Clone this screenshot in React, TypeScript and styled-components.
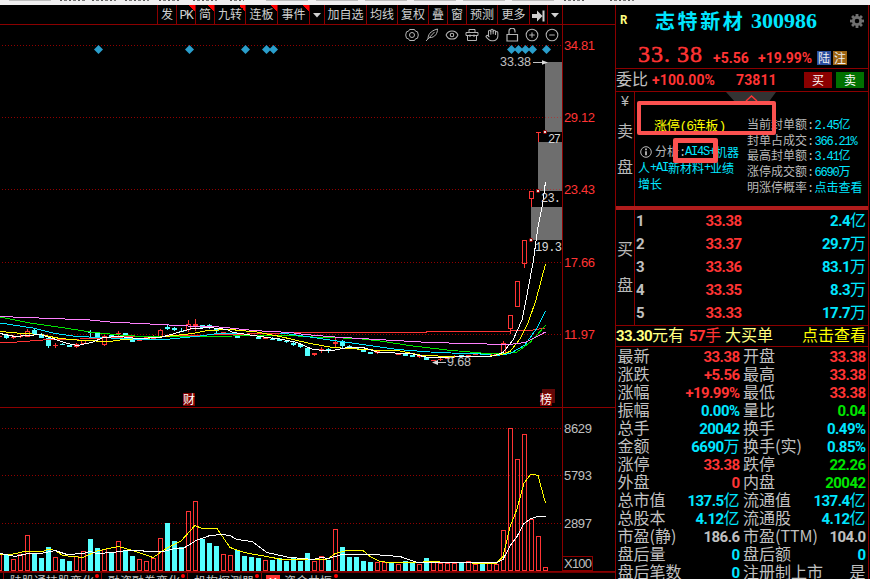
import React from "react";
import styled, { createGlobalStyle, css } from "styled-components";
import { Eye, Hand, CirclePlus, CircleMinus } from "lucide-react";

const RED = "#ff3434";
const CYAN = "#00e6ff";
const BAR_CYAN = "#54ffff";
const GREEN = "#00e600";
const GREY = "#c0c0c0";
const LINE = "#8b0000";
const PALE = "#ffff80";
const YELLOW = "#ffff00";
const CJK = `"Noto Sans CJK SC", sans-serif`;

const Global = createGlobalStyle`
  * { box-sizing: border-box; }
  html, body { margin: 0; background: #000; overflow: hidden; }
  body { font-family: "Liberation Sans", ${CJK}; color: ${GREY}; }
`;

/* ---------- frame ---------- */
const Screen = styled.div`
  width: 870px;
  height: 579px;
  display: flex;
  flex-direction: column;
  background: #000;
  overflow: hidden;
`;
const TopStrip = styled.div`
  flex: 0 0 5px;
  display: flex;
  background: #f0eff0;
`;
const Fragment = styled.i<{ $w: number; $ml: number; $text?: boolean }>`
  flex: none;
  width: ${(p) => p.$w}px;
  margin-left: ${(p) => p.$ml}px;
  height: 1px;
  background: ${(p) =>
    p.$text
      ? "repeating-linear-gradient(90deg,#555 0 2px,transparent 2px 4px,#777 4px 7px,transparent 7px 9px)"
      : "#bdbdbd"};
`;
const Body = styled.div`
  flex: 1;
  display: flex;
  min-height: 0;
`;
const Left = styled.div`
  width: 615px;
  display: flex;
  flex-direction: column;
`;

/* ---------- toolbar ---------- */
const Toolbar = styled.div`
  display: flex;
  flex: 0 0 20px;
  border-bottom: 1px solid ${LINE};
  padding-left: 157px;
`;
const Tool = styled.div<{ $w: number; $hot?: boolean; $last?: boolean }>`
  width: ${(p) => p.$w}px;
  height: 19px;
  border-left: 1px solid ${LINE};
  ${(p) => p.$last && css`border-right: 1px solid ${LINE};`}
  display: flex;
  align-items: center;
  justify-content: center;
  padding-top: 2px;
  font: 12px/17px "Liberation Sans", ${CJK};
  color: #d0d0d0;
  white-space: nowrap;
  ${(p) =>
    p.$hot &&
    css`background: linear-gradient(45deg, transparent 50%, #ff0000 50%) top right / 6px 6px no-repeat;`}
`;
const Latin = styled.span`
  font: 13px/17px "Liberation Mono", monospace;
  letter-spacing: -1.4px;
`;
const tools: [React.ReactNode, number, boolean][] = [
  ["发", 19, false],
  [<Latin key="pk">PK</Latin>, 19, true],
  ["简", 19, true],
  ["九转", 31, true],
  ["连板", 32, true],
  ["事件", 32, true],
  [<Caret key="a" />, 15, false],
  ["加自选", 42, false],
  ["均线", 31, false],
  ["复权", 31, false],
  ["叠", 19, false],
  ["窗", 19, false],
  ["预测", 31, false],
  ["更多", 32, false],
  [<Skip key="b" />, 18, false],
  [<Caret key="c" />, 16, false],
];
function Caret() {
  return (
    <svg width="8" height="5" viewBox="0 0 8 5">
      <path d="M0 0h8L4 4.6z" fill="#d0d0d0" />
    </svg>
  );
}
function Skip() {
  return (
    <svg width="13" height="12" viewBox="0 0 13 12">
      <path d="M0 4h5V0.500l5.500 5.500-5.500 5.500V8H0zM10.500 0.500h2v11h-2z" fill="#d0d0d0" />
    </svg>
  );
}

/* ---------- chart ---------- */
const ChartSvg = styled.svg`
  display: block;
  flex: 0 0 547px;
  font-family: "Liberation Sans", ${CJK};
`;
const ChartArea = styled.div`
  position: relative;
  height: 547px;
`;
const ChartIcons = styled.div`
  position: absolute;
  top: 3px;
  right: 56px;
  display: flex;
  gap: 6px;
  color: #b4b4b4;
`;
const Outline = styled.svg.attrs({ width: 14, height: 14, viewBox: "0 0 14 14" })`
  fill: none;
  stroke: currentColor;
  stroke-width: 1;
`;

// [body top, body bottom, wick top, wick bottom, colour: r = rising, c = falling]
type Candle = [number, number, number, number, "r" | "c"];
const candles: Candle[] = [
  [335, 338, 335, 339, "c"], [337, 338, 335, 339, "r"], [336, 337, 333, 338, "r"], [331, 337, 329, 337, "r"],
  [330, 334, 328, 334, "c"], [334, 338, 333, 338, "c"], [338, 346, 338, 348, "c"], [345, 346, 343, 348, "r"],
  [344, 345, 343, 345, "c"], [345, 347, 345, 347, "c"], [344, 347, 343, 348, "r"], [340, 344, 340, 344, "r"],
  [332, 333, 330, 337, "c"], [333, 338, 333, 338, "c"], [336, 345, 335, 346, "r"], [335, 338, 334, 338, "c"],
  [333, 334, 331, 337, "r"], [333, 337, 333, 337, "c"], [339, 342, 339, 342, "c"], [339, 341, 339, 341, "r"],
  [337, 338, 337, 338, "r"], [337, 339, 335, 339, "r"], [330, 337, 329, 337, "r"], [327, 329, 325, 330, "c"],
  [328, 330, 327, 331, "c"], [331, 332, 328, 332, "c"], [324, 330, 320, 332, "r"], [324, 326, 319, 331, "r"],
  [325, 328, 325, 328, "c"], [325, 327, 324, 329, "c"], [329, 331, 329, 333, "c"], [332, 334, 332, 334, "r"],
  [334, 335, 334, 335, "r"], [335, 338, 335, 338, "c"], [334, 336, 334, 336, "c"], [335, 336, 335, 336, "c"],
  [337, 339, 336, 339, "c"], [337, 339, 337, 339, "r"], [339, 340, 337, 340, "c"], [339, 341, 339, 341, "c"],
  [341, 342, 341, 343, "c"], [343, 345, 341, 346, "c"], [344, 347, 343, 348, "c"], [348, 356, 348, 356, "c"],
  [353, 355, 353, 356, "r"], [349, 351, 347, 353, "r"], [349, 351, 348, 353, "c"], [342, 344, 337, 348, "r"],
  [341, 346, 340, 348, "c"], [346, 347, 345, 347, "c"], [348, 349, 348, 349, "c"], [350, 352, 350, 352, "c"],
  [352, 354, 352, 354, "c"], [351, 353, 351, 354, "r"], [352, 353, 352, 353, "r"], [352, 353, 352, 353, "c"],
  [354, 355, 354, 355, "r"], [354, 356, 354, 356, "c"], [355, 357, 355, 357, "c"], [356, 357, 355, 358, "r"],
  [357, 360, 357, 360, "c"], [360, 361, 360, 361, "r"], [359, 360, 358, 361, "r"], [357, 359, 357, 359, "r"],
  [356, 357, 355, 358, "r"], [355, 357, 355, 357, "c"], [355, 356, 355, 356, "r"], [354, 355, 354, 355, "r"],
  [353, 355, 353, 355, "c"], [354, 355, 354, 355, "r"], [354, 355, 354, 355, "r"], [343, 354, 341, 354, "r"],
  [315, 329, 315, 334, "r"], [281, 307, 281, 307, "r"], [240, 264, 240, 268, "r"], [191, 199, 191, 207, "r"],
];
// [bar top, colour]
const volumes: [number, "r" | "c"][] = [
  [554, "c"], [559, "r"], [554, "r"], [535, "r"], [553, "c"], [558, "c"], [547, "c"], [557, "r"], [559, "c"], [561, "c"],
  [556, "r"], [551, "r"], [539, "c"], [548, "c"], [549, "r"], [552, "c"], [541, "r"], [551, "c"], [556, "c"], [559, "r"],
  [561, "r"], [558, "r"], [538, "r"], [523, "c"], [541, "c"], [547, "c"], [511, "r"], [501, "r"], [539, "c"], [543, "c"],
  [546, "c"], [554, "r"], [555, "r"], [550, "c"], [556, "c"], [557, "c"], [558, "c"], [560, "r"], [560, "c"], [558, "c"],
  [561, "c"], [558, "c"], [561, "c"], [553, "c"], [561, "r"], [556, "r"], [560, "c"], [529, "r"], [547, "c"], [557, "c"],
  [557, "c"], [561, "c"], [562, "c"], [562, "r"], [562, "r"], [563, "c"], [564, "r"], [561, "c"], [563, "c"], [564, "r"],
  [558, "c"], [562, "r"], [563, "r"], [563, "r"], [563, "r"], [563, "c"], [561, "r"], [564, "r"], [563, "c"], [563, "r"],
  [564, "r"], [530, "r"], [428, "r"], [459, "r"], [434, "r"], [519, "r"], [536, "r"], [567, "r"],
];
const averages: [string, string][] = [
  ["#ff3434", "0,343 17,342 43,340 80,339 123,337 167,336 207,335 267,333.500 290,333 360,332.500 493,331.500 530,330.500 545,328"],
  ["#00e600", "0,317 15,320 30,323 65,328 90,332 120,335 143,336.500 200,336.500 233,336 290,335.500 313,337 358,338.500 380,341 413,346 447,350 487,353.500 503,354 517,352 530,342.500 545.500,325.500"],
  ["#00e6ff", "0,323 33,328 55,333.500 77,336.500 100,337.500 133,339 170,339 185,337.500 200,336 217,333.500 243,333 280,333 293,334.500 330,340 373,346 397,349.500 437,352.500 480,354 497,355.500 510,353.500 525,345 537,328 545.500,311"],
  ["#ffff00", "0,331.500 17,333 40,334.500 60,338.500 82,340.500 110,341.500 123,339.500 150,338 170,336 193,333.500 207,330.500 230,329.500 257,332 280,336.500 310,343.500 333,347.500 373,350 397,350.500 420,355 447,356.500 487,356.500 503,354 510,351.500 520,339 528,323 536,300 545.500,264"],
  ["#ff80ff", "0,316.500 52,318.500 90,320 110,322 150,324 197,326.500 213,326.500 230,328 243,329.500 262,331 290,332.500 305,334.500 335,337 377,339.500 430,342.500 487,344 513,344 525,342.500 535,337.500 545.500,332"],
  ["#ffffff", "0,333.500 15,336.500 40,334.500 53,338.500 67,343.500 78,345.500 93,342 103,337.500 120,336.500 137,338.500 160,337.500 173,334 190,329 210,327.500 227,329.500 233,332.500 247,334.500 267,337.500 280,339 297,342.500 313,349.500 330,351 347,347.500 363,347.500 377,352 413,354 430,358 467,356.500 493,356 503,352.500 513,340 522,320 526,300 533,263 538,227 542,207 545.500,182"],
];
const volumeAverages: [string, string][] = [
  ["#ffff00", "0,554 13,554 27,551 41,552 49,549 55,550.500 63,555.500 83,557.500 97,551 118,546.500 133,550.500 153,557.500 167,548 181,541 195,525.500 202,528.500 217,528.500 230,547.500 244,552.500 272,557.500 282,559.500 303,559.500 328,559 335,553.500 347,550.500 363,550.500 370,556.500 380,561.500 390,562.500 413,562.500 433,561.500 447,562.500 496,563.500 503,556.500 510,527 517,509 524,483 531,474 538,475.500 545.500,503"],
  ["#ffffff", "0,553.500 15,556.500 28,553.500 41,553.500 55,550.500 67,554.500 83,553.500 90,551.500 97,553.500 113,552.500 123,551 140,550.500 147,551.500 163,551.500 175,548.500 183,548.500 197,540 210,535.500 222,534.500 230,535.500 237,539.500 252,541.500 267,552.500 287,557 313,559.500 321,557.500 328,558.500 342,554.500 373,554.500 400,556.500 417,562.500 496,563 503,559.500 510,546 517,536.500 524,523.500 531,518.500 538,516.500 545.500,516.500"],
];
const priceTicks: [number, string][] = [[45, "34.81"], [117, "29.12"], [189, "23.43"], [262, "17.66"], [334, "11.97"]];
const volTicks: [number, string][] = [[428, "8629"], [475, "5793"], [523, "2897"]];
const diamonds = [98, 189, 245, 266, 273, 511, 518, 525, 532, 546];
// [left, top, bottom, label, label x, label width]
const gaps: [number, number, number, string, number, number][] = [
  [545, 62, 132, "27", 548, 13],
  [538, 142, 191, "23.", 541, 20],
  [531, 207, 240, "19.3", 535, 27],
];

function Chart() {
  return (
    <ChartSvg width="615" height="547" viewBox="0 25 615 547" shapeRendering="crispEdges">
      {[...priceTicks, ...volTicks].map(([y]) => (
        <line key={y} x1="2" x2="562" y1={y + 0.5} y2={y + 0.5} stroke="#900000" strokeDasharray="1 2" />
      ))}
      {gaps.map(([x, y1, y2]) => (
        <rect key={x} x={x} y={y1} width={562 - x} height={y2 - y1} fill="#6e6e6e" />
      ))}
      <path d="M538 189.500h24M545 117.500h17" stroke="#a04040" strokeDasharray="1 2" />
      {candles.map(([t, b, wt, wb, c], i) => {
        const x = 6 + i * 7;
        const h = b - t;
        const color = c === "r" ? RED : BAR_CYAN;
        return (
          <g key={i}>
            <path d={`M${x + 0.5} ${wt}V${t}M${x + 0.5} ${b}V${wb}`} stroke={color} />
            {c === "r" && h > 3 ? (
              <rect x={x - 1.5} y={t + 0.5} width="4" height={h - 1} fill="none" stroke={color} />
            ) : (
              <rect x={x - 2} y={t} width="5" height={h} fill={color} />
            )}
          </g>
        );
      })}
      <path d="M536 132.500h5M538.500 132v10" stroke={RED} fill="none" />
      <path d="M0 336.500h2" stroke={RED} />
      {averages.map(([c, p]) => (
        <polyline key={c} points={p} fill="none" stroke={c} />
      ))}
      {volumes.map(([t, c], i) => {
        const x = 4 + i * 7;
        return c === "r" ? (
          <rect key={i} x={x + 0.5} y={t + 0.5} width="4" height={570 - t} fill="none" stroke={RED} />
        ) : (
          <rect key={i} x={x} y={t} width="5" height={571 - t} fill={BAR_CYAN} />
        );
      })}
      <path d="M0 554.500h1.500v16H0" stroke={RED} fill="none" />
      {volumeAverages.map(([c, p]) => (
        <polyline key={c} points={p} fill="none" stroke={c} />
      ))}
      <path d="M0 407.500H615M562.500 25V571M0 571.500H615" stroke={LINE} />
      <rect x="562.500" y="556.500" width="30" height="14" fill="none" stroke={LINE} />
      <g shapeRendering="geometricPrecision">
        {diamonds.map((x) => (
          <path key={x} d={`M${x + 0.5} 45l4.500 4.500l-4.500 4.500l-4.500 -4.500z`} fill="#2a9ecb" />
        ))}
        {gaps.map(([x, , y2]) => (
          <circle key={x} cx={x} cy={y2} r="1.700" fill="#ddd" stroke="#900" />
        ))}
        <path d="M533 62.500h12" stroke="#c0c0c0" />
        <path d="M548 62.500l-6 -2.200v4.400z" fill="#ddd" />
        <path d="M437 362.500h9" stroke="#c0c0c0" />
        <path d="M432 362.500l6 -2.500v5z" fill="#ddd" />
      </g>
      <g fontSize="13" fill={GREY}>
        <text x="500" y="66" textLength="31" fontSize="12.500">33.38</text>
        <text x="447" y="366" textLength="24" fontSize="12.500">9.68</text>
        {volTicks.map(([y, s]) => (
          <text key={s} x="564" y={y + 5} textLength="28">{s}</text>
        ))}
        <text x="564" y="568" textLength="28">X100</text>
      </g>
      <g fontSize="13" fill={RED}>
        {priceTicks.map(([y, s]) => (
          <text key={s} x="564" y={y + 5} textLength="31">{s}</text>
        ))}
      </g>
      <g fontSize="12" fill="#d8d8d8" fontFamily='"Liberation Mono", monospace'>
        {gaps.map(([x, , y2, s, tx, w]) => (
          <text key={x} x={tx} y={y2 + 11} textLength={w}>{s}</text>
        ))}
      </g>
      <rect x="183" y="393" width="12" height="13" fill="#800000" />
      <rect x="542" y="389" width="13" height="14" fill="#600808" />
      <rect x="540" y="393" width="12" height="13" fill="#800000" />
      <g fontSize="12" fill="#fff">
        <text x="183" y="404">财</text>
        <text x="540" y="404">榜</text>
      </g>
    </ChartSvg>
  );
}

/* ---------- bottom tabs ---------- */
const Tabs = styled.div`
  flex: 0 0 7px;
  height: 7px;
  display: flex;
  padding-left: 3px;
  border-top: 1px solid #700000;
  overflow: hidden;
`;
const Tab = styled.div<{ $w: number }>`
  flex: none;
  position: relative;
  width: ${(p) => p.$w}px;
  height: 20px;
  padding-left: 6px;
  border-left: 1px solid ${LINE};
  font: 12px/16px ${CJK};
  color: ${GREY};
  display: flex;
  gap: 4px;
  white-space: nowrap;
  &::after {
    content: "";
    position: absolute;
    right: 2px;
    top: 1px;
    width: 4px;
    height: 4px;
    border-radius: 50%;
    background: #ff0000;
  }
`;
const Flag = styled.b`
  width: 14px;
  height: 14px;
  margin: 2px 0 0 -2px;
  background: ${RED};
  color: #fff;
  font: bold 11px/14px "Liberation Sans", sans-serif;
  text-align: center;
`;

/* ---------- quote panel ---------- */
const Panel = styled.div`
  width: 254px;
  height: 574px;
  border-left: 1px solid ${LINE};
  border-right: 1px solid ${LINE};
  display: flex;
  flex-direction: column;
  overflow: hidden;
`;
const TitleRow = styled.div`
  flex: 0 0 31px;
  display: flex;
  align-items: center;
  white-space: nowrap;
`;
const Mark = styled.span`
  width: 39px;
  padding-left: 4px;
  font: bold 12px/12px "Liberation Mono", monospace;
  color: ${PALE};
`;
const Name = styled.span`
  width: 96px;
  font: bold 20px/26px ${CJK};
  letter-spacing: 2.600px;
  color: ${CYAN};
`;
const Code = styled.span`
  width: 99px;
  font: bold 22px/28px "Liberation Serif", serif;
  color: ${CYAN};
`;
const PriceRow = styled.div`
  flex: 0 0 33px;
  display: flex;
  align-items: flex-end;
  padding: 0 0 3px 22px;
  border-bottom: 1px solid ${LINE};
  color: ${RED};
  white-space: nowrap;
`;
const BigPrice = styled.span`
  width: 75px;
  font: 24px/21px "Liberation Serif", serif;
  letter-spacing: 1px;
  -webkit-text-stroke: 0.5px ${RED};
  i { display: inline-block; width: 13px; font-style: normal; letter-spacing: 0; }
`;
const num = css`
  font-family: Roboto, sans-serif;
  font-weight: bold;
`;
const Change = styled.span<{ $w: number }>`
  ${num}
  width: ${(p) => p.$w}px;
  font-size: 14px;
  line-height: 13px;
`;
const Tag = styled.span<{ $bg: string }>`
  width: 14px;
  height: 14px;
  margin: 0 2px 0 0;
  background: ${(p) => p.$bg};
  color: #eee;
  font: 12px/13px ${CJK};
  text-align: center;
`;
const RatioRow = styled.div`
  flex: 0 0 23px;
  display: flex;
  align-items: center;
  border-bottom: 1px solid ${LINE};
  white-space: nowrap;
`;
const Ratio = styled.span<{ $w: number }>`
  ${num}
  width: ${(p) => p.$w}px;
  padding-left: 4px;
  font-size: 14px;
  line-height: 20px;
  letter-spacing: 0.1px;
  color: ${RED};
`;
const Trade = styled.span<{ $bg: string }>`
  width: 28px;
  height: 16px;
  margin-right: 4px;
  background: ${(p) => p.$bg};
  color: #fff;
  font: 12px/15px ${CJK};
  text-align: center;
`;
const Side = styled.div<{ $top: number }>`
  flex: 0 0 19px;
  border-right: 1px solid ${LINE};
  display: flex;
  flex-direction: column;
  align-items: center;
  padding-top: ${(p) => p.$top}px;
  gap: 20px;
  font: 16px/16px ${CJK};
  color: #b8b8b8;
`;
const Yen = styled.span`
  height: 9px;
  font: 14px/19px "Liberation Mono", monospace;
`;
const SellBlock = styled.div`
  flex: 0 0 114px;
  display: flex;
`;
const SellBody = styled.div`
  position: relative;
  flex: 1;
  display: flex;
`;
const Divider = styled.div`
  flex: 0 0 4px;
  background: #b01c1c;
`;
const Pull = styled.svg`
  position: absolute;
  left: 91px;
  top: 0;
`;
const Frame = styled.div<{ $x: number; $y: number; $w: number; $h: number; $b: number }>`
  position: absolute;
  left: ${(p) => p.$x}px;
  top: ${(p) => p.$y}px;
  width: ${(p) => p.$w}px;
  height: ${(p) => p.$h}px;
  border: ${(p) => p.$b}px solid #fb5150;
  border-radius: 2px;
`;
const Limit = styled.div`
  width: 112px;
  padding: 23px 0 0 3px;
`;
const LimitTitle = styled.div`
  height: 20px;
  padding-left: 16px;
  font: 13px/20px ${CJK};
  letter-spacing: -0.2px;
  color: ${YELLOW};
  white-space: nowrap;
`;
const Analysis = styled.div`
  margin-top: 9px;
  font: 12px/16px ${CJK};
  color: ${CYAN};
  white-space: nowrap;
  div { display: flex; align-items: center; height: 16px; }
  em { font-style: normal; color: #b8b8b8; }
  svg { margin: 0 3px 0 2px; color: #b8b8b8; }
`;
const Mono = styled.span`
  font-family: "Liberation Mono", monospace;
  letter-spacing: -1.200px;
`;
const Facts = styled.div`
  padding-top: 24px;
`;
const Fact = styled.div`
  display: flex;
  height: 15.700px;
  font: 12px/15.700px ${CJK};
  color: #b8b8b8;
  white-space: nowrap;
  > span:first-child { width: 67.500px; }
  > span:last-child { color: ${CYAN}; }
`;
const BuyBlock = styled.div`
  flex: 0 0 116px;
  display: flex;
  border-bottom: 1px solid ${LINE};
`;
const Levels = styled.div`
  flex: 1;
  padding: 0 2px 0 1px;
`;
const Level = styled.div`
  display: grid;
  grid-template-columns: 22px 83.500px 1fr;
  align-items: center;
  height: 22.800px;
`;
const Run = styled.span<{ $c?: string; $end?: boolean }>`
  display: flex;
  align-items: center;
  justify-content: ${(p) => (p.$end ? "flex-end" : "flex-start")};
  color: ${(p) => p.$c || "inherit"};
`;
const Alert = styled.div`
  flex: 0 0 21px;
  display: flex;
  align-items: center;
  padding: 0 2px 0 0;
  border-bottom: 1px solid ${LINE};
  white-space: nowrap;
`;
const Piece = styled(Run)<{ $w?: number }>`
  ${(p) => (p.$w ? `width: ${p.$w}px;` : "margin-left: auto;")}
`;
const Digits = styled.b`
  ${num}
  font-size: 15px;
  line-height: 18px;
  letter-spacing: -0.560px;
`;
const Han = styled.span`
  display: block;
  height: 18px;
  font: 16px/14px ${CJK};
`;
const Stats = styled.div`
  padding: 1px 2px 0 1.500px;
`;
const StatRow = styled.div`
  display: grid;
  grid-template-columns: 122px 122.500px;
  column-gap: 3.500px;
  height: 18px;
`;
const Stat = styled.div`
  display: flex;
  justify-content: space-between;
  white-space: nowrap;
`;

function Mixed({ text }: { text: string }) {
  const runs = text.match(/[\u4e00-\u9fff]+|[^\u4e00-\u9fff]+/g) || [];
  return (
    <>
      {runs.map((r, i) => (/[\u4e00-\u9fff]/.test(r) ? <Han key={i}>{r}</Han> : <Digits key={i}>{r}</Digits>))}
    </>
  );
}
function Small({ text }: { text: string }) {
  const runs = text.match(/[\u4e00-\u9fff]+|[^\u4e00-\u9fff]+/g) || [];
  return (
    <>{runs.map((r, i) => (/[\u4e00-\u9fff]/.test(r) ? r : <Mono key={i}>{r}</Mono>))}</>
  );
}

const facts = [
  ["当前封单额:", "2.45亿"],
  ["封单占成交:", "366.21%"],
  ["最高封单额:", "3.41亿"],
  ["涨停成交额:", "6690万"],
  ["明涨停概率:", "点击查看"],
];
const levels = [
  ["33.38", "2.4亿"],
  ["33.37", "29.7万"],
  ["33.36", "83.1万"],
  ["33.35", "8.3万"],
  ["33.33", "17.7万"],
];
const stats: [string, string, string, string, string, string][] = [
  ["最新", "33.38", RED, "开盘", "33.38", RED],
  ["涨跌", "+5.56", RED, "最高", "33.38", RED],
  ["涨幅", "+19.99%", RED, "最低", "33.38", RED],
  ["振幅", "0.00%", CYAN, "量比", "0.04", GREEN],
  ["总手", "20042", CYAN, "换手", "0.49%", CYAN],
  ["金额", "6690万", CYAN, "换手(实)", "0.85%", CYAN],
  ["涨停", "33.38", RED, "跌停", "22.26", GREEN],
  ["外盘", "0", RED, "内盘", "20042", GREEN],
  ["总市值", "137.5亿", CYAN, "流通值", "137.4亿", CYAN],
  ["总股本", "4.12亿", CYAN, "流通股", "4.12亿", CYAN],
  ["市盈(静)", "186.6", GREY, "市盈(TTM)", "104.0", GREY],
  ["盘后量", "0", CYAN, "盘后额", "0", CYAN],
  ["盘后笔数", "0", CYAN, "注册制上市", "是", GREY],
];

function Nut() {
  return (
    <Outline>
      <path d="M4.500 1.500h5l1 1.700 2 .6.800 3.200-.8 3.200-2 .6-1 1.700h-5l-1-1.700-2-.6L.7 7l.8-3.200 2-.6z" />
      <circle cx="7" cy="7" r="2.500" />
    </Outline>
  );
}
function Quill() {
  return (
    <Outline>
      <path d="M1 13L9.500 4M3 11c0-4 2-8 9.500-10 0 4-2 8.500-8 8.700" />
    </Outline>
  );
}
function Toolbox() {
  return (
    <Outline>
      <path d="M4 4V1.500h6V4M1 4.500h12v3H1zM2.500 7.500v5h9v-5M5 6.500v2.500M9 6.500v2.500" />
    </Outline>
  );
}
function Unlocked() {
  return (
    <Outline>
      <path d="M2 6.500h10.500v6.500H2zM4 6.500v-3a3 3 0 0 1 6-.5v1.500" strokeWidth="1.200" />
    </Outline>
  );
}

function Gear() {
  const teeth = Array.from({ length: 8 }, (_, i) => i * 45);
  return (
    <svg width="14" height="14" viewBox="-7 -7 14 14">
      {teeth.map((a) => (
        <rect key={a} x="-1.400" y="-7" width="2.800" height="4" fill="#707070" transform={`rotate(${a})`} />
      ))}
      <circle r="3.700" fill="none" stroke="#707070" strokeWidth="2.800" />
    </svg>
  );
}

export default function App() {
  return (
    <Screen>
      <Global />
      <TopStrip>
        <Fragment $w={42} $ml={9} />
        <Fragment $w={25} $ml={9} $text />
        <Fragment $w={24} $ml={7} $text />
        <Fragment $w={24} $ml={9} $text />
        <Fragment $w={22} $ml={10} $text />
        <Fragment $w={24} $ml={12} $text />
        <Fragment $w={14} $ml={13} $text />
        <Fragment $w={42} $ml={22} />
        <Fragment $w={42} $ml={8} />
        <Fragment $w={42} $ml={7} />
        <Fragment $w={42} $ml={7} />
        <Fragment $w={42} $ml={7} />
        <Fragment $w={42} $ml={7} />
        <Fragment $w={22} $ml={10} $text />
        <Fragment $w={24} $ml={24} $text />
      </TopStrip>
      <Body>
        <Left>
          <Toolbar>
            {tools.map(([t, w, hot], i) => (
              <Tool key={i} $w={w} $hot={hot} $last={i === tools.length - 1}>{t}</Tool>
            ))}
          </Toolbar>
          <ChartArea>
            <Chart />
            <ChartIcons>
              <Nut />
              <Quill />
              <Eye size={14} strokeWidth={1.8} />
              <Toolbox />
              <Hand size={14} strokeWidth={1.8} />
              <Unlocked />
              <CirclePlus size={14} strokeWidth={1.8} />
              <CircleMinus size={14} strokeWidth={1.8} />
            </ChartIcons>
          </ChartArea>
          <Tabs>
            <Tab $w={98}>陆股通持股变化</Tab>
            <Tab $w={86}>融资融券变化</Tab>
            <Tab $w={74}>机构探测器</Tab>
            <Tab $w={79}><Flag>H</Flag>资金共振</Tab>
          </Tabs>
        </Left>
        <Panel>
          <TitleRow>
            <Mark>R</Mark>
            <Name>志特新材</Name>
            <Code>300986</Code>
            <Gear />
          </TitleRow>
          <PriceRow>
            <BigPrice>33<i>.</i>38</BigPrice>
            <Change $w={45}>+5.56</Change>
            <Change $w={59}>+19.99%</Change>
            <Tag $bg="#2a4f9e">陆</Tag>
            <Tag $bg="#9c6414">注</Tag>
          </PriceRow>
          <RatioRow>
            <Han>委比</Han>
            <Ratio $w={84}>+100.00%</Ratio>
            <Ratio $w={72}>73811</Ratio>
            <Trade $bg="#8b0000">买</Trade>
            <Trade $bg="#007000">卖</Trade>
          </RatioRow>
          <SellBlock>
            <Side $top={1}>
              <Yen>¥</Yen>
              <span>卖</span>
              <span>盘</span>
            </Side>
            <SellBody>
              <Pull width="50" height="11" viewBox="0 0 50 11">
                <path d="M0 0h50l-8 11H10z" fill="#333" />
                <path d="M20 9l5.500-5 5.500 5" fill="none" stroke={RED} strokeWidth="1.500" />
              </Pull>
              <Limit>
                <LimitTitle>涨停<Mono>(6</Mono>连板<Mono>)</Mono></LimitTitle>
                <Analysis>
                  <div>
                    <svg width="12" height="12" viewBox="0 0 12 12" fill="none" stroke="currentColor">
                      <circle cx="6" cy="6" r="5.300" />
                      <path d="M6 2.600v1.600M6 5.200v4" strokeWidth="1.800" />
                    </svg>
                    <em>分析<Mono>:</Mono></em>
                    <Small text="AI4S+机器" />
                  </div>
                  <div><Small text="人+AI新材料+业绩" /></div>
                  <div>增长</div>
                </Analysis>
              </Limit>
              <Facts>
                {facts.map(([k, v]) => (
                  <Fact key={k}>
                    <span><Small text={k} /></span>
                    <span><Small text={v} /></span>
                  </Fact>
                ))}
              </Facts>
              <Frame $x={2} $y={9} $w={139} $h={34} $b={4} />
              <Frame $x={38} $y={46} $w={45} $h={25} $b={5} />
            </SellBody>
          </SellBlock>
          <Divider />
          <BuyBlock>
            <Side $top={30}>
              <span>买</span>
              <span>盘</span>
            </Side>
            <Levels>
              {levels.map(([p, q], i) => (
                <Level key={p}>
                  <Run><Mixed text={String(i + 1)} /></Run>
                  <Run $c={RED} $end><Mixed text={p} /></Run>
                  <Run $c={CYAN} $end><Mixed text={q} /></Run>
                </Level>
              ))}
            </Levels>
          </BuyBlock>
          <Alert>
            <Piece $c={PALE} $w={73}><Mixed text="33.30元有" /></Piece>
            <Piece $c={RED} $w={36}><Mixed text="57手" /></Piece>
            <Piece $c={PALE} $w={60}><Mixed text="大买单" /></Piece>
            <Piece $c={YELLOW}><Mixed text="点击查看" /></Piece>
          </Alert>
          <Stats>
            {stats.map(([k1, v1, c1, k2, v2, c2]) => (
              <StatRow key={k1}>
                <Stat><Han>{k1}</Han><Run $c={c1} $end><Mixed text={v1} /></Run></Stat>
                <Stat><Han>{k2}</Han><Run $c={c2} $end><Mixed text={v2} /></Run></Stat>
              </StatRow>
            ))}
          </Stats>
        </Panel>
      </Body>
    </Screen>
  );
}
